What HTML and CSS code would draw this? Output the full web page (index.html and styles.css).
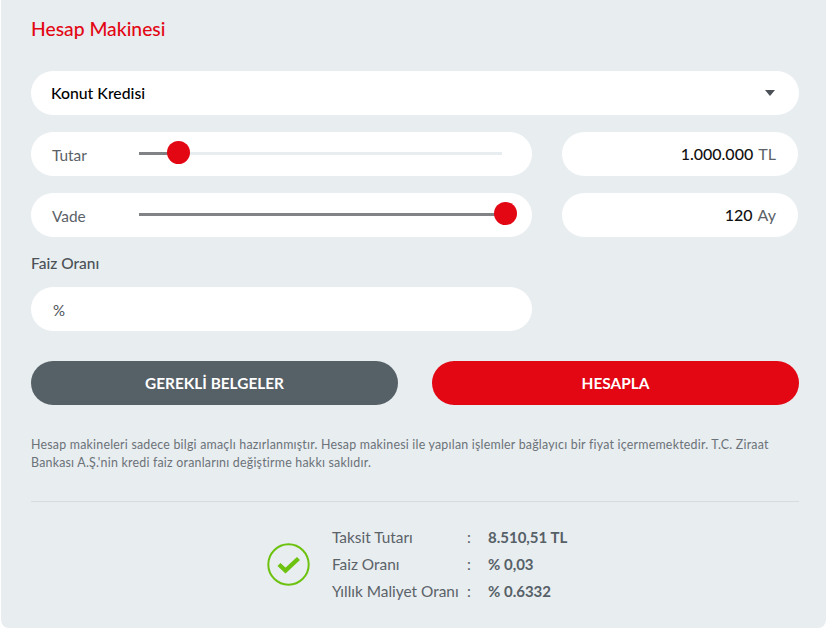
FILE: index.html
```html
<!DOCTYPE html>
<html lang="tr">
<head>
<meta charset="utf-8">
<title>Hesap Makinesi</title>
<link rel="stylesheet" href="styles.css">
</head>
<body>
<main class="panel">
  <h1 class="title">Hesap Makinesi</h1>
  <div class="pill select">
    <span class="select-text">Konut Kredisi</span>
    <span class="caret"></span>
  </div>
  <div class="row">
    <div class="pill slider-pill">
      <span class="slider-label">Tutar</span>
      <div class="track">
        <div class="fill fill-tutar"></div>
        <div class="thumb thumb-tutar"></div>
      </div>
    </div>
    <div class="pill value-pill"><b class="num">1.000.000</b> <span class="unit">TL</span></div>
  </div>
  <div class="row">
    <div class="pill slider-pill">
      <span class="slider-label">Vade</span>
      <div class="track">
        <div class="fill fill-vade"></div>
        <div class="thumb thumb-vade"></div>
      </div>
    </div>
    <div class="pill value-pill"><b class="num">120</b> <span class="unit">Ay</span></div>
  </div>
  <div class="faiz-label">Faiz Oranı</div>
  <div class="pill faiz-input">%</div>
  <div class="buttons">
    <div class="btn btn-grey">GEREKLİ BELGELER</div>
    <div class="btn btn-red">HESAPLA</div>
  </div>
  <p class="note">Hesap makineleri sadece bilgi amaçlı hazırlanmıştır. Hesap makinesi ile yapılan işlemler bağlayıcı bir fiyat içermemektedir. T.C. Ziraat Bankası A.Ş.'nin kredi faiz oranlarını değiştirme hakkı saklıdır.</p>
  <div class="result">
    <svg class="check" width="43" height="43" viewBox="0 0 43 43" aria-hidden="true">
      <circle cx="21.5" cy="21.5" r="20.2" fill="none" stroke="#6cc20e" stroke-width="2"/>
      <path d="M12 21.5l6.5 6L31.5 15.5" fill="none" stroke="#6cc20e" stroke-width="4.4"/>
    </svg>
    <dl class="table">
      <dt>Taksit Tutarı</dt><dd class="colon">:</dd><dd class="val">8.510,51 TL</dd>
      <dt>Faiz Oranı</dt><dd class="colon">:</dd><dd class="val">% 0,03</dd>
      <dt>Yıllık Maliyet Oranı</dt><dd class="colon">:</dd><dd class="val">% 0.6332</dd>
    </dl>
  </div>
</main>
</body>
</html>
```
FILE: styles.css
```css
* { box-sizing: border-box; }
html, body { margin: 0; padding: 0; background: #fff; }
body { font-family: "Lato", "Liberation Sans", sans-serif; width: 826px; height: 628px; overflow: hidden; }
.panel {
  margin-left: 1px;
  width: 825px;
  height: 628px;
  background: #e8edf0;
  border-radius: 0 0 8px 8px;
  padding: 17px 27px 0 30px;
}
.title { margin: 0 0 30px; font-size: 19.3px; line-height: 24px; font-weight: 500; color: #e30613; }
.pill { background: #fff; border-radius: 22px; height: 44px; display: flex; align-items: center; }
.select { width: 768px; padding: 0 24px 0 20px; justify-content: space-between; margin-bottom: 17px; }
.select-text { font-size: 15.8px; font-weight: 500; color: #000; margin-bottom: 2px; }
.caret { width: 0; height: 0; border-left: 5px solid transparent; border-right: 5px solid transparent; border-top: 6px solid #4b5157; }
.row { display: flex; gap: 30px; margin-bottom: 17px; }
.slider-pill { width: 501px; padding: 0 30px 0 21px; }
.slider-label { width: 87px; font-size: 15.4px; color: #5b6268; margin-top: 2px; }
.track { position: relative; flex: 1; height: 3px; margin-bottom: 1px; background: #e8edf0; }
.fill { position: absolute; left: 0; top: 0; height: 3px; background: #808285; }
.fill-tutar { width: 30px; }
.fill-vade { width: 100%; }
.thumb { position: absolute; top: -11px; width: 23px; height: 23px; border-radius: 50%; background: #e30613; }
.thumb-tutar { left: 28px; }
.thumb-vade { left: 355px; }
.value-pill { display: block; width: 236px; text-align: right; padding-right: 22px; font-size: 16px; line-height: 43px; }
.num { font-weight: 500; color: #111; }
.unit { color: #5b6268; margin-left: 1px; }
.faiz-label { font-size: 15.5px; font-weight: 500; color: #4b5157; line-height: 20px; margin-top: -1px; margin-bottom: 14px; }
.faiz-input { width: 501px; padding: 2px 0 0 22px; font-size: 15px; color: #4b5157; margin-bottom: 30px; }
.buttons { display: flex; gap: 34px; margin-bottom: 31px; }
.btn { width: 367px; height: 44px; border-radius: 22px; display: flex; align-items: center; justify-content: center; color: #fff; font-size: 15.4px; font-weight: 700; }
.btn-grey { background: #566067; }
.btn-red { background: #e30613; }
.note { margin: 0; width: 768px; font-size: 12.4px; letter-spacing: .22px; line-height: 18px; color: #6b7278; padding-bottom: 29px; border-bottom: 1px solid #d7dce0; }
.result { display: flex; align-items: center; justify-content: center; gap: 21px; margin-top: 22px; padding-left: 1px; }
.check { flex: none; }
.table { margin: 0; display: grid; grid-template-columns: 136px 21px 76px; font-size: 15.4px; line-height: 27px; color: #5b6268; white-space: nowrap; }
.table dt { padding-left: 1px; }
.table dd { margin: 0; }
.val { font-weight: 700; font-size: 15px; color: #566067; }
```
